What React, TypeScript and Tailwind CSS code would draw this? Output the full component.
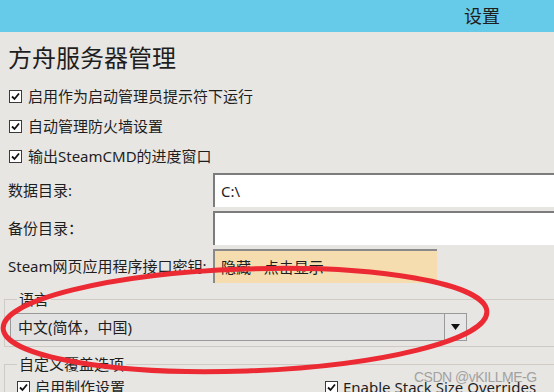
const font = { fontFamily: '"Noto Sans", "Noto Sans CJK SC", sans-serif' }

function Check() {
  return (
    <span className="flex h-[13px] w-[13px] shrink-0 items-center justify-center border border-[#3a3a3a] bg-white">
      <svg width="9" height="9" viewBox="0 0 9 9">
        <path d="M1 4.5 L3.5 7 L8 1.5" fill="none" stroke="#111" strokeWidth="1.8" />
      </svg>
    </span>
  )
}

const options = [
  "启用作为启动管理员提示符下运行",
  "自动管理防火墙设置",
  "输出SteamCMD的进度窗口",
]

export default function App() {
  return (
    <div
      className="relative h-[392px] w-[554px] overflow-hidden bg-[#E8E6E3] text-[#1e1e1e]"
      style={font}
    >
      {/* Title bar */}
      <div className="flex h-[32px] items-center justify-end bg-[#66CBE8] pr-[54px] text-[18px]">
        设置
      </div>

      <h1 className="pl-[8px] pt-[11px] text-[24px] leading-[30px]">方舟服务器管理</h1>

      {/* Checkboxes */}
      <div className="mt-[8px] flex flex-col">
        {options.map((o) => (
          <label key={o} className="flex h-[30px] items-center gap-[6px] pl-[9px] text-[15px]">
            <Check />
            {o}
          </label>
        ))}
      </div>

      {/* Paths */}
      <div className="mt-[2px] flex flex-col gap-[4px] text-[15px]">
        <div className="flex items-center">
          <span className="w-[213px] pl-[8px]">数据目录:</span>
          <div className="flex h-[34px] flex-1 items-center border-l-2 border-t-2 border-[#7c7c7c] bg-white pl-[6px]">
            C:\
          </div>
        </div>
        <div className="flex items-center">
          <span className="w-[213px] pl-[8px]">备份目录：</span>
          <div className="h-[34px] flex-1 border-l-2 border-t-2 border-[#7c7c7c] bg-white" />
        </div>
        <div className="flex items-center">
          <span className="w-[213px] pl-[8px]">Steam网页应用程序接口密钥:</span>
          <div className="flex h-[34px] w-[224px] items-center border-l-2 border-t-2 border-[#8a8a8a] bg-[#F5DDB0] pl-[6px]">
            隐藏 - 点击显示
          </div>
        </div>
      </div>

      {/* Language */}
      <fieldset className="ml-[4px] mt-[6px] border border-r-0 border-[#cfcac3] pb-[5px]">
        <legend className="ml-[12px] px-[2px] text-[15px] leading-[20px]">语言</legend>
        <div className="ml-[5px] mt-[4px] flex h-[28px] w-[457px] items-center border border-[#9a9a9a] bg-[#E2E2E2] text-[15px]">
          <span className="flex-1 pl-[7px]">中文(简体，中国)</span>
          <span className="flex h-full w-[22px] items-center justify-center border-l border-[#9a9a9a] bg-[#e6e6e6]">
            <svg width="9" height="6" viewBox="0 0 9 6">
              <path d="M0 0 H9 L4.5 6 Z" fill="#111" />
            </svg>
          </span>
        </div>
      </fieldset>

      {/* Overrides */}
      <fieldset className="ml-[4px] mt-[7px] border border-r-0 border-[#cfcac3]">
        <legend className="ml-[12px] px-[2px] text-[15px] leading-[20px]">自定义覆盖选项</legend>
        <div className="flex h-[26px] items-center pl-[12px] text-[15px]">
          <label className="flex w-[308px] items-center gap-[5px]">
            <Check />
            启用制作设置
          </label>
          <label className="flex items-center gap-[5px]">
            <Check />
            Enable Stack Size Overrides
          </label>
        </div>
      </fieldset>

      {/* Watermark */}
      <div
        className="pointer-events-none absolute left-[414px] top-[368px] whitespace-nowrap text-[14px] leading-[18px] tracking-[-0.5px] text-[#a2a2a2]"
        style={{ fontFamily: '"Liberation Sans", sans-serif' }}
      >
        CSDN @vKILLME-G
      </div>

      {/* Red annotation ellipse */}
      <svg className="pointer-events-none absolute inset-0" width="554" height="392">
        <ellipse
          cx="245"
          cy="320"
          rx="242"
          ry="51"
          fill="none"
          stroke="#EC2A34"
          strokeWidth="5"
          transform="rotate(-2 245 320)"
        />
      </svg>
    </div>
  )
}
